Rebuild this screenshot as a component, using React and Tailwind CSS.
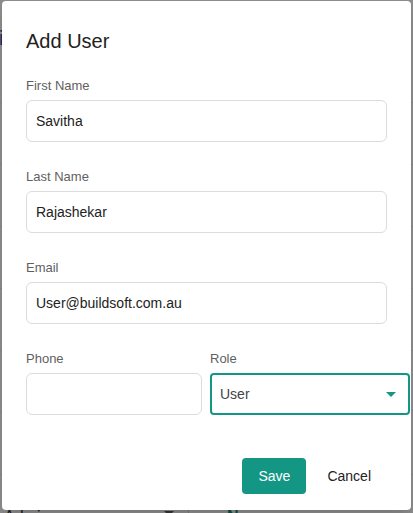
export default function App() {
  const rows = [0, 1, 2, 3, 4, 5];
  return (
    <div className="relative h-[513px] w-[413px] overflow-hidden bg-[#8b8b8b] font-['Liberation_Sans',Arial,sans-serif]">
      {/* page behind the modal */}
      <div className="flex flex-col">
        <div className="h-[103px] border-b border-[#838383] pt-[28px] pl-0">
          <div className="-ml-[14px] text-[20px] leading-[20px] text-[#1e2a5a]">View</div>
        </div>
        {rows.map((r) => (
          <div key={r} className="h-[62px] border-b border-[#838383]" />
        ))}
        <div className="flex items-start pt-[32px] text-[16px] leading-[20px]">
          <span className="ml-[4px] w-[160px] text-[#1a1a1a]">Admin</span>
          <span className="mt-[4px] h-0 w-0 border-x-[5px] border-t-[5px] border-x-transparent border-t-[#333]" />
          <span className="ml-[14px] h-[20px] border-l border-[#777]" />
          <span className="ml-[38px] font-bold text-[#0b4f45]">Name</span>
        </div>
      </div>

      {/* modal dialog */}
      <div className="absolute left-[2px] top-[1px] flex h-[509px] w-[409px] flex-col rounded bg-white px-6 pb-4 pt-[26px] shadow-lg">
        <h2 className="text-[20px] leading-[28px] text-[#222]">Add User</h2>
        <div className="mt-[22px] flex flex-col gap-[26px]">
          <Field label="First Name" value="Savitha" />
          <Field label="Last Name" value="Rajashekar" />
          <Field label="Email" value="User@buildsoft.com.au" />
          <div className="flex gap-2">
            <div className="flex w-[176px] shrink-0 flex-col">
              <label className="text-[13px] leading-[18px] text-[#5f5f5f]">Phone</label>
              <input
                className="mt-[5px] h-[42px] w-full rounded-md border border-[#dcdcdc] px-[9px] text-[14px] text-[#222] outline-none"
                defaultValue=""
              />
            </div>
            <div className="flex w-[200px] shrink-0 flex-col">
              <label className="text-[13px] leading-[18px] text-[#5f5f5f]">Role</label>
              <div className="mt-[5px] flex h-[42px] items-center justify-between rounded border-2 border-[#139683] pl-2 pr-[12px]">
                <span className="text-[14px] text-[#444]">User</span>
                <svg width="10" height="5" viewBox="0 0 10 5">
                  <path d="M0 0 L10 0 L5 5 Z" fill="#139683" />
                </svg>
              </div>
            </div>
          </div>
        </div>
        <div className="mt-[43px] flex justify-end">
          <button className="h-9 rounded bg-[#139683] px-4 text-[14px] text-white">Save</button>
          <button className="ml-[5px] h-9 px-4 text-[14px] text-[#222]">Cancel</button>
        </div>
      </div>
    </div>
  );
}

function Field({ label, value }) {
  return (
    <div className="flex flex-col">
      <label className="text-[13px] leading-[18px] text-[#5f5f5f]">{label}</label>
      <input
        className="mt-[5px] h-[42px] w-full rounded-md border border-[#dcdcdc] px-[9px] text-[14px] text-[#222] outline-none"
        defaultValue={value}
      />
    </div>
  );
}
